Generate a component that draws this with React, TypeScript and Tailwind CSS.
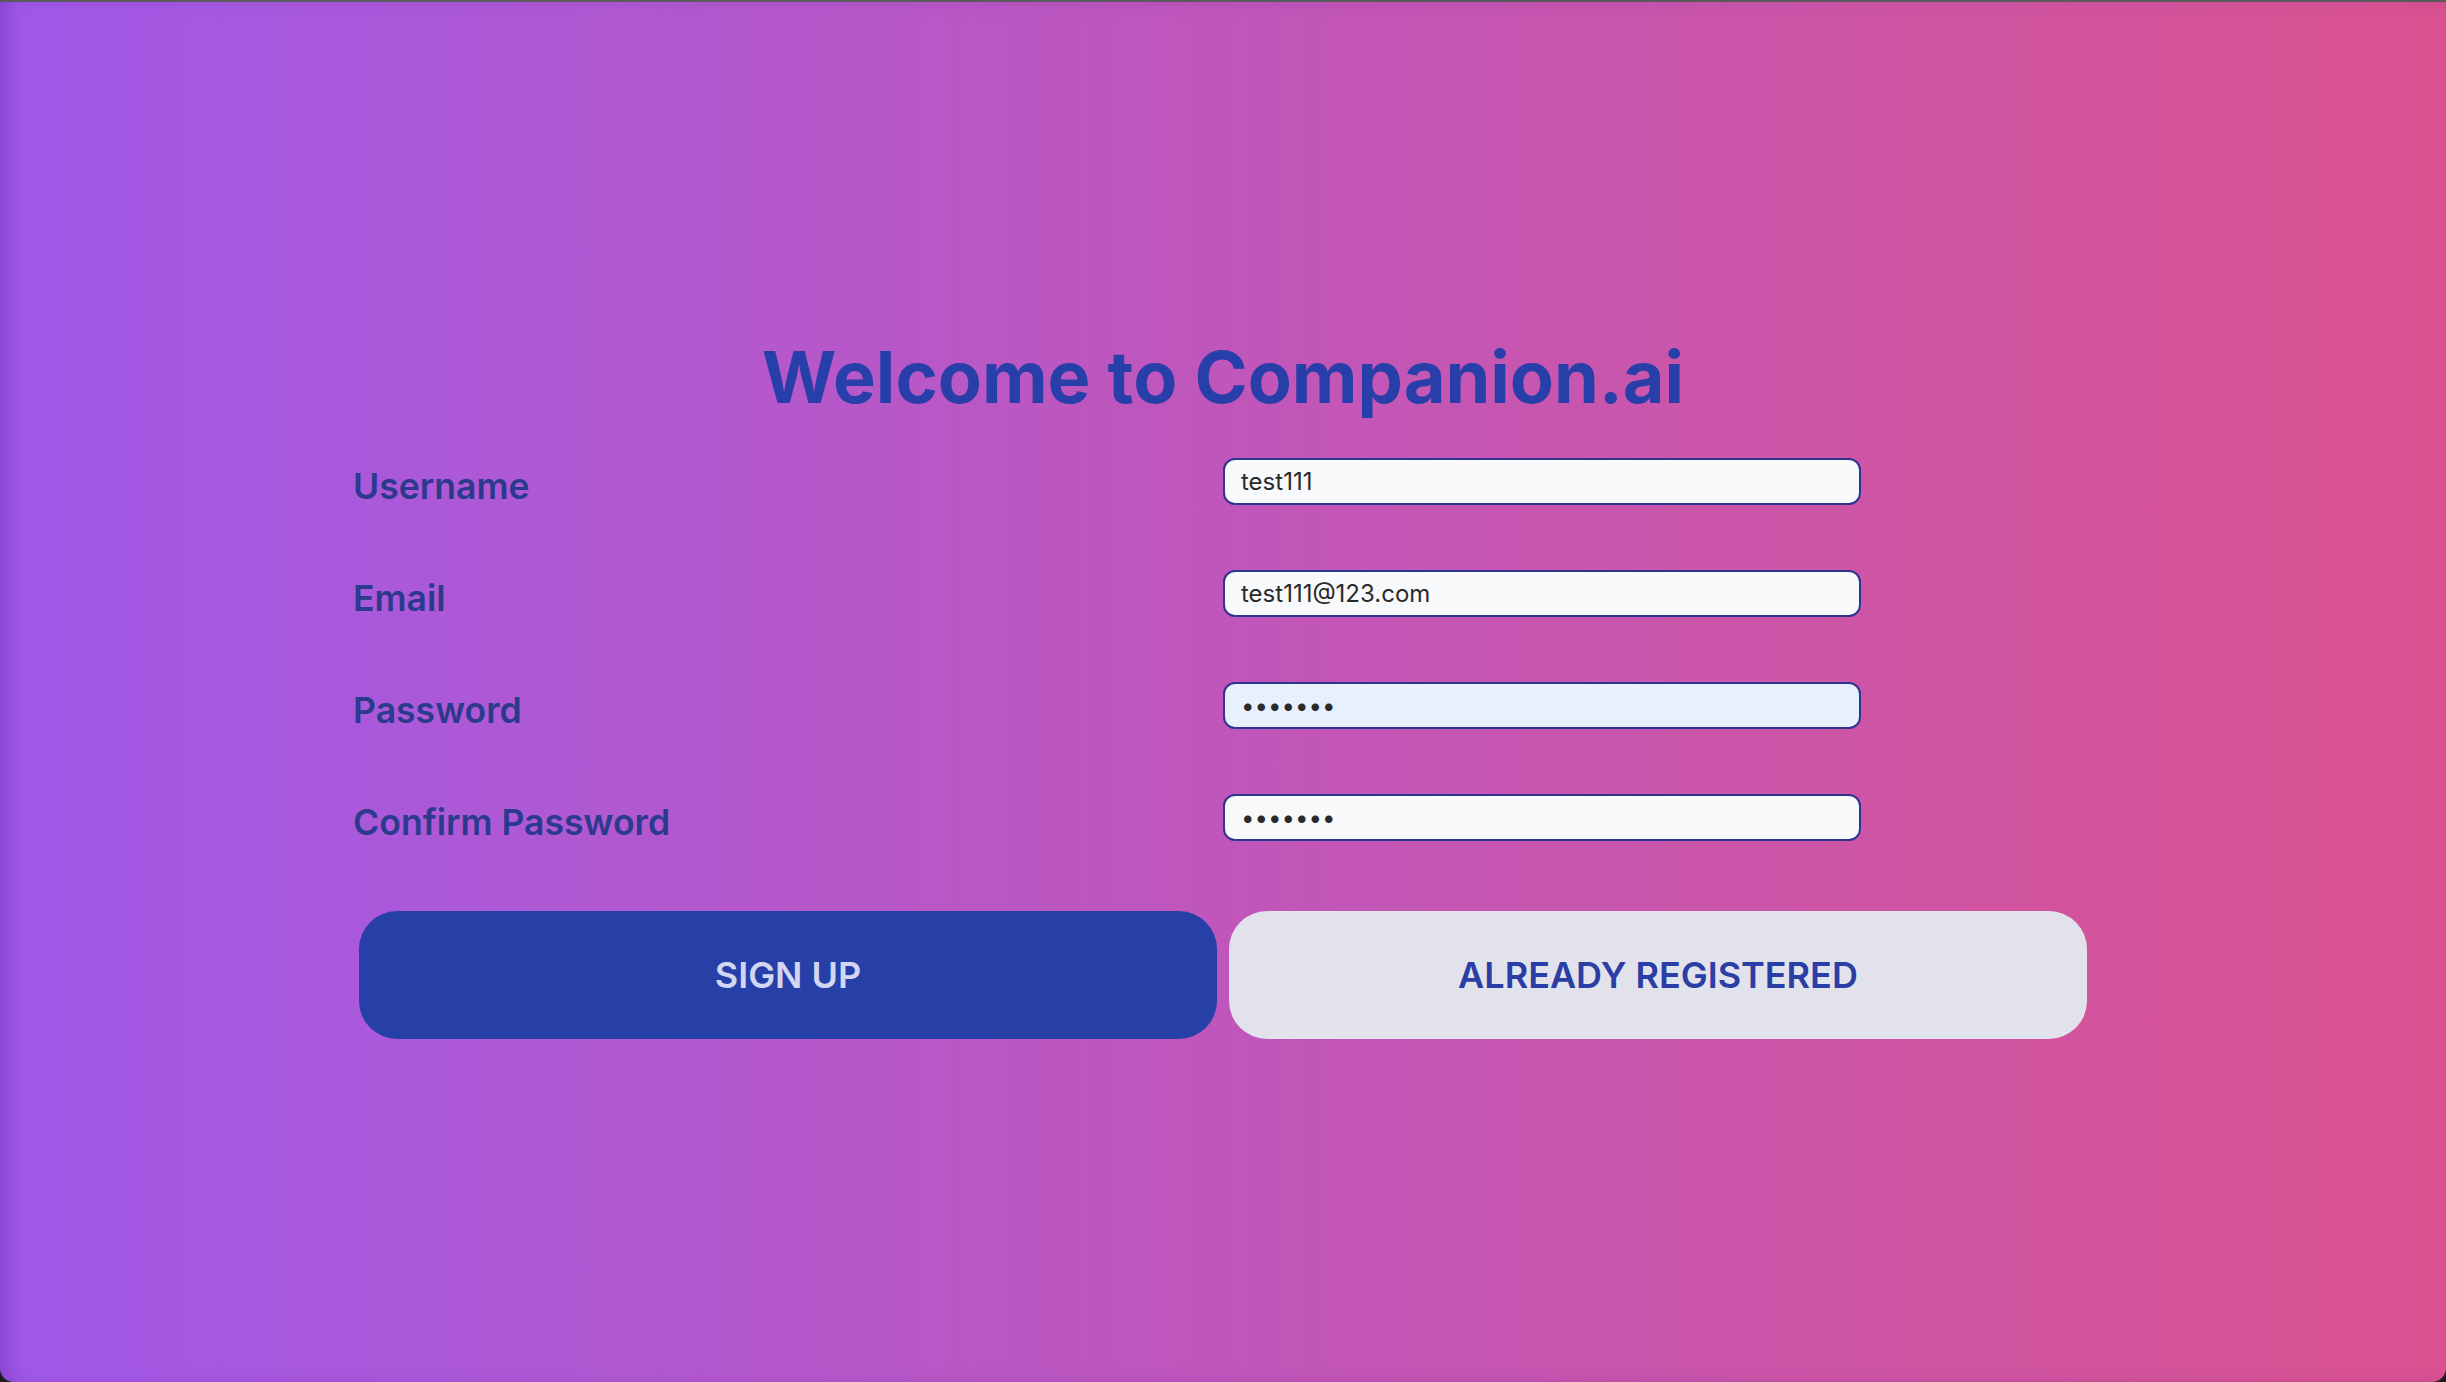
import React from "react";

const fields = [
  { label: "Username", type: "text", value: "test111", bg: "bg-[#f8f9fb]" },
  { label: "Email", type: "text", value: "test111@123.com", bg: "bg-[#f8f9fb]" },
  { label: "Password", type: "password", value: "1234567", bg: "bg-[#e8f0fe]" },
  { label: "Confirm Password", type: "password", value: "1234567", bg: "bg-[#f8f9fb]" },
];

export default function App() {
  return (
    <div className="h-screen w-full bg-[#1c1c1e] font-['Inter',sans-serif]">
      <div className="h-full w-full border-t-2 border-[#5b5b5d] rounded-b-[14px] bg-linear-to-r from-[#a058e8] via-[#c056bb] to-[#db5290] shadow-[inset_14px_0_22px_-10px_rgba(70,20,140,0.35)] flex flex-col items-center pt-[339px]">
        <h1 className="text-[72px] leading-none font-bold text-[#283ea9]">
          Welcome to Companion.ai
        </h1>
        <div className="mt-[14px] w-[1740px] flex flex-col">
          {fields.map((f) => (
            <div key={f.label} className="grid grid-cols-2 h-[112px] items-center">
              <label className="text-[35.6px] font-semibold text-[#2b3a8c] mt-[8px]">{f.label}</label>
              <input
                readOnly
                type={f.type}
                defaultValue={f.value}
                className={`w-[638px] h-[47px] -mt-[3px] rounded-[12px] border-2 border-[#2e3590] ${f.bg} px-[16px] text-[24px] text-[#2a2a2a] outline-none`}
              />
            </div>
          ))}
          <div className="grid grid-cols-2 mt-[36px]">
            <button className="mx-[6px] h-[128px] rounded-[38px] bg-[#2740a8] text-[36px] font-semibold text-[#d3d6f2]">
              SIGN UP
            </button>
            <button className="mx-[6px] h-[128px] rounded-[38px] bg-[#e2e2ec] text-[36px] font-semibold text-[#2a3ea6]">
              ALREADY REGISTERED
            </button>
          </div>
        </div>
      </div>
    </div>
  );
}
